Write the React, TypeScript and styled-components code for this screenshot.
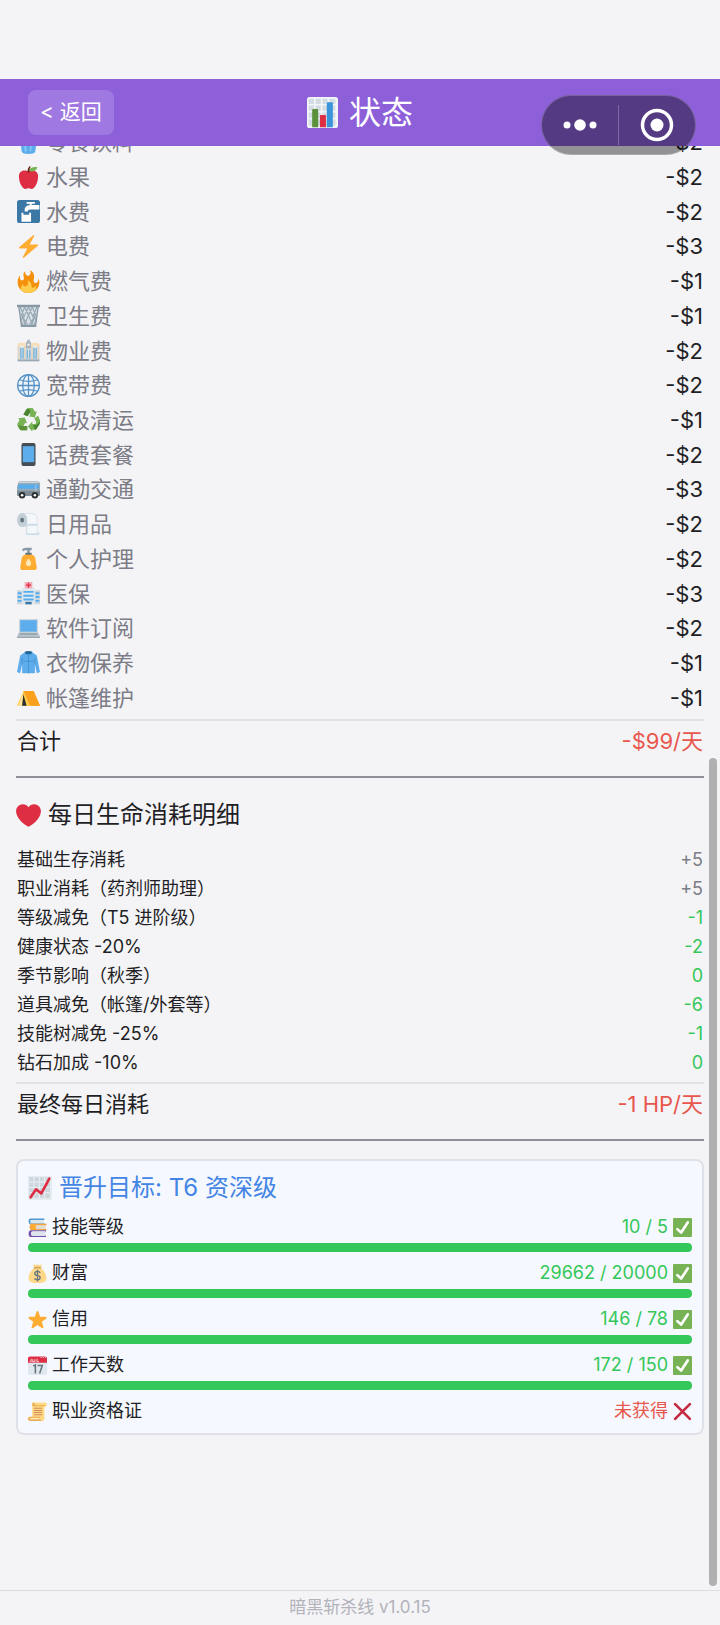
import React from "react";
import styled, { createGlobalStyle } from "styled-components";

const GlobalStyle = createGlobalStyle`
  * { box-sizing: border-box; }
  body {
    margin: 0;
    background: #f4f4f7;
    color: #1f1f25;
    font-family: Inter, "Noto Sans CJK SC", sans-serif;
  }
`;

/* ---------- icons, all drawn on a 36 x 36 grid ---------- */

const shapes = {
  drink: (
    <>
      <path fill="#CCD6DD" d="M4 8h28v4H4z" />
      <path fill="#5DADEC" d="M5 12h26l-2 18q0 6-11 6T7 30z" />
      <path fill="#88C9F9" d="M11 14h3l1 18h-3zM21 14h3l-2 18h-2z" />
    </>
  ),
  apple: (
    <>
      <path fill="#DD2E44" d="M24 7c-3 0-3 1-6 1s-3-1-6-1c-4 0-9 2-9 9 0 11 6 20 10 20 3 0 3-1 5-1s2 1 5 1c4 0 10-9 10-20 0-7-5-9-9-9z" />
      <path fill="#77B255" d="M18 8C20 3 25 1 32 2c-2 6-8 8-14 6z" />
      <path fill="#662113" d="M17 10c-1-4 0-7 3-10l1.500 1c-2 3-2.500 5-2 9z" />
    </>
  ),
  tap: (
    <>
      <rect width="36" height="36" rx="4" fill="#3B78A6" />
      <path fill="#fff" d="M15 3h13v3h-5v2h12v7H24q-6-1-7 2v1h-5v-4q1-5 8-6V6h-5z" />
      <path fill="#fff" d="M7 20h3v3h9v-3h3v14H7z" />
    </>
  ),
  bolt: (
    <path fill="#FFAC33" d="M32.938 15.651C32.792 15.260 32.418 15 32 15H19.925L26.890 1.458c.219-.426.106-.947-.271-1.243C26.437.071 26.218 0 26 0c-.233 0-.466.082-.653.243L18 6.588 3.347 19.243c-.316.273-.430.714-.284 1.105S3.582 21 4 21h12.075L9.110 34.542c-.219.426-.106.947.271 1.243.182.144.401.215.619.215.233 0 .466-.082.653-.243L18 29.412l14.653-12.655c.317-.273.430-.714.285-1.106z" />
  ),
  fire: (
    <>
      <path fill="#F4900C" d="M35 19c0-2.062-.367-4.039-1.040-5.868-.460 5.389-3.333 8.157-6.335 6.868-2.812-1.208-.917-5.917-.777-8.164.236-3.809-.012-8.169-6.931-11.794 2.875 5.500.333 8.917-2.333 9.125-2.958.231-5.667-2.542-4.667-7.042-3.238 2.386-3.332 6.402-2.333 9 1.042 2.708-.042 4.958-2.583 5.208-2.840.280-4.418-3.041-2.963-8.333C2.520 10.965 1 14.805 1 19c0 9.389 7.611 17 17 17s17-7.611 17-17z" />
      <path fill="#FFCC4D" d="M28.394 23.999c.148 3.084-2.561 4.293-4.019 3.709-2.106-.843-1.541-2.291-2.083-5.291s-2.625-5.083-5.708-6c2.250 6.333-1.247 8.667-3.080 9.084-1.872.426-3.753-.001-3.968-4.007C7.352 23.668 6 26.676 6 30c0 .368.023.730.055 1.090C9.125 34.124 13.342 36 18 36s8.875-1.876 11.945-4.910c.032-.360.055-.722.055-1.090 0-2.187-.584-4.236-1.606-6.001z" />
    </>
  ),
  basket: (
    <>
      <path fill="#DCE3E8" d="M2 4h32l-4 32H6z" />
      <path fill="none" stroke="#99AAB5" strokeWidth="2" d="M5 5l5 12-4 9 5 9M12 5L7 17l7 18M12 5l6 12-7 18M18 5l-8 17 8 13M18 5l8 17-8 13M24 5l-6 12 7 18M24 5l5 12-7 18M31 5l-5 12 4 9-5 9" />
      <path fill="none" stroke="#8899A6" strokeWidth="2" d="M3 5l4 29h22l4-29" />
      <path fill="#8899A6" d="M0 1h36v4H0zM6 33h24v3H6z" />
    </>
  ),
  building: (
    <>
      <path fill="#D9DEE3" d="M1 12h34v22H1z" />
      <path fill="#F6DEBB" d="M0 10l3-4h11v5H0zM22 6h11l3 4v1H22z" />
      <path fill="#E3D6C2" d="M1 11h3v21H1zM32 11h3v21h-3zM11 11h3v21h-3zM22 11h3v21h-3z" />
      <path fill="#6CB0DC" d="M5 14h2v17H5zM8.500 14h2v17h-2zM25.500 14h2v17h-2zM29 14h2v17h-2zM15 17h2v14h-2zM19 17h2v14h-2z" />
      <path fill="#A9B4BD" d="M14 7q0-3 2-3V1h4v3q2 0 2 3v8h-8z" />
      <circle cx="18" cy="9" r="2" fill="#E8EDF0" />
      <path fill="#99AAB5" d="M1 32h34v3H1z" />
    </>
  ),
  globe: (
    <g fill="none" stroke="#5490C4" strokeWidth="2">
      <circle cx="18" cy="18" r="17" fill="#EDF5FC" />
      <ellipse cx="18" cy="18" rx="9" ry="17" />
      <path d="M18 1v34M1 18h34M4 9q14 5 28 0M4 27q14-5 28 0" />
    </g>
  ),
  recycle: (
    <>
      <path fill="#77B255" d="M10 10l5-8q1-2 4-2h4q2 0 3 2l2 4 3-1-3 10-10-2 3-2-3-4-3 6z" />
      <path fill="#4B8430" d="M10 10l5-8q2-2 4 0l2 3-4 8z" />
      <path fill="#77B255" d="M2 16l10-1 4 9-3-1-3 5h6v7H7q-2 0-3-2l-3-5q-1-2 0-4l3-5z" />
      <path fill="#5C913B" d="M1 27l3 6q1 2 3 2h9v-7H7z" />
      <path fill="#77B255" d="M27 16l6-4 3 7q1 3-1 6l-4 7q-1 2-3 2h-4v3l-7-8 7-8v4h5l1-3z" />
      <path fill="#4B8430" d="M36 21q0 3-1 5l-4 6q-1 2-3 2l-3-7h4q3-1 7-6z" />
    </>
  ),
  phone: (
    <>
      <rect x="7" width="22" height="36" rx="3" fill="#454D55" />
      <path fill="#5DADEC" d="M9 5h18v25H9z" />
    </>
  ),
  bus: (
    <>
      <path fill="#99AAB5" d="M2 7q1-2 4-2h26q3 0 4 3v18q0 2-2 2H2q-2 0-2-2V14z" />
      <path fill="#808C95" d="M0 20h36v6q0 2-2 2H2q-2 0-2-2z" />
      <path fill="#55ACEE" d="M3 10h31v7H1z" />
      <path fill="#CCD6DD" d="M3 6h31v2H3zM29 10h1v16h-1z" />
      <circle cx="8" cy="27" r="5" fill="#292F33" /><circle cx="8" cy="27" r="2" fill="#fff" />
      <circle cx="28" cy="27" r="5" fill="#292F33" /><circle cx="28" cy="27" r="2" fill="#fff" />
    </>
  ),
  roll: (
    <>
      <path fill="#D5DEE4" d="M8 0h16q8 1 8 12v17l4 3-3 3-19-1V22H8z" />
      <path fill="#F5F8FA" d="M10 1h14q7 1 7 11v5H16Q17 5 10 1zM16 20h15v12H16z" />
      <ellipse cx="8" cy="11" rx="8" ry="11" fill="#C3CFD7" />
      <ellipse cx="8" cy="11" rx="3" ry="4" fill="#66757F" />
      <path fill="none" stroke="#BDDDF4" d="M15 19h17M14 33h20" />
    </>
  ),
  lotion: (
    <>
      <path fill="#8899A6" d="M8 4q1-3 6-3h9v4h-3v5h-4V5h-4l-3 2z" />
      <path fill="#66757F" d="M13 9h10v4H13z" />
      <path fill="#FFAC33" d="M12 12h12q5 2 5 8l2 13q0 3-3 3H8q-3 0-3-3l2-13q0-6 5-8z" />
      <path fill="#FFE8B6" d="M18 18q5 6 4 9-1 3-4 3t-4-3q-1-3 4-9z" />
    </>
  ),
  hospital: (
    <>
      <path fill="#CCD6DD" d="M0 13h9v22H0zM27 13h9v22h-9z" />
      <path fill="#E1E8ED" d="M8 9h20v26H8z" />
      <path fill="#55ACEE" d="M10 14h16v3H10zM10 20h16v3H10zM10 26h16v3H10zM1 16h6v3H1zM1 22h6v3H1zM1 28h6v3H1zM29 16h6v3h-6zM29 22h6v3h-6zM29 28h6v3h-6z" />
      <path fill="#3B78A6" d="M13 31h10v4H13z" />
      <path fill="#F4ABBA" d="M12 0h12v10H12z" />
      <path fill="#DD2E44" d="M17 1h2v3h3v2h-3v3h-2V6h-3V4h3z" />
    </>
  ),
  laptop: (
    <>
      <path fill="#CCD6DD" d="M5 3h26q2 0 2 2v19H3V5q0-2 2-2z" />
      <path fill="#5DADEC" d="M5 5h26v18H5z" />
      <path fill="#B8C3CB" d="M3 24h30l3 7v2H0v-2z" />
      <path fill="#9AA8B2" d="M5 25h26l1 3H4zM0 31h36v2H0z" />
    </>
  ),
  coat: (
    <>
      <path fill="#5DADEC" d="M12 2h12l7 5 5 26-5 2-3-14v14H8V21L5 35l-5-2L5 7z" />
      <path fill="#226699" d="M12 1q6-2 12 0l-2 4h-8z" />
      <path fill="none" stroke="#3B88C3" d="M18 4v31M8 21V11M28 21V11M10 16h16" />
    </>
  ),
  tent: (
    <>
      <path fill="#FFAC33" d="M10 8h16l10 23H9z" />
      <path fill="#F9A01F" d="M11 8h15l10 23H21z" />
      <path fill="#FFCC4D" d="M10 8L0 31h20z" />
      <path fill="#292F33" d="M10 13l-2 18h7z" />
      <path fill="#FFE8B6" d="M10 8l-3 23H3z" />
    </>
  ),
  heart: (
    <path fill="#DD2E44" d="M35.885 11.833c0-5.450-4.418-9.868-9.867-9.868-3.308 0-6.227 1.633-8.018 4.129-1.791-2.496-4.710-4.129-8.017-4.129-5.450 0-9.868 4.417-9.868 9.868 0 .772.098 1.520.266 2.241C1.751 22.587 11.216 31.568 18 34.034c6.783-2.466 16.249-11.447 17.617-19.959.170-.721.268-1.469.268-2.242z" />
  ),
  bars: (
    <>
      <rect width="36" height="36" rx="3" fill="#F2F5F7" />
      <path fill="#D3DCE3" d="M2 2h6v6H2zM10 2h6v6h-6zM18 2h6v6h-6zM26 2h7v6h-7zM2 10h6v6H2zM10 10h6v6h-6zM18 10h6v6h-6zM26 10h7v6h-7zM2 18h6v6H2zM10 18h6v6h-6zM18 18h6v6h-6zM26 18h7v6h-7zM2 26h6v7H2zM10 26h6v7h-6zM18 26h6v7h-6zM26 26h7v7h-7z" />
      <path fill="#5C913B" d="M6 15q0-1 1-1h5q1 0 1 1v20H6z" />
      <path fill="#DD2E44" d="M15 22q0-1 1-1h5q1 0 1 1v13h-7z" />
      <path fill="#3B94D9" d="M23 7q0-1 1-1h5q1 0 1 1v28h-7z" />
    </>
  ),
  trend: (
    <>
      <rect width="36" height="36" rx="2" fill="#E6EBEF" />
      <path fill="#CCD6DD" d="M2 2h6v6H2zM10 2h6v6h-6zM18 2h6v6h-6zM26 2h7v6h-7zM2 10h6v6H2zM10 10h6v6h-6zM18 10h6v6h-6zM26 10h7v6h-7zM2 18h6v6H2zM10 18h6v6h-6zM18 18h6v6h-6zM26 18h7v6h-7zM2 26h6v7H2zM10 26h6v7h-6zM18 26h6v7h-6zM26 26h7v7h-7z" />
      <path fill="none" stroke="#DD2E44" strokeWidth="4" strokeLinecap="round" strokeLinejoin="round" d="M4 32l8-12 8 6L32 4" />
    </>
  ),
  books: (
    <>
      <path fill="#4E9AD0" d="M4 1h27v3H5v6h26v2H4Q1 11 1 6t3-5z" />
      <path fill="#DCE5EB" d="M5 4h25v6H5z" />
      <path fill="#F4A23A" d="M6 11h29v3H7v7h28v2H6q-3-1-3-6t3-6z" />
      <path fill="#E0DCD2" d="M14 14h20v7H14z" />
      <path fill="#FFAC33" d="M6 12h9v10H6z" />
      <path fill="#7450A8" d="M4 23h30v3H6v7h28v3H4q-3-1-3-6t3-7z" />
      <path fill="#DCE5EB" d="M8 25h25v9H8z" />
    </>
  ),
  money: (
    <>
      <path fill="#FDD888" d="M12 7L9 1l5 1 4-1 4 1 5-1-3 6c7 6 11 13 11 20 0 6-4 9-17 9S1 33 1 27C1 20 5 13 12 7z" />
      <path fill="#D5A25C" d="M11 6q7-2 14 0v3q-7-2-14 0z" />
      <path fill="none" stroke="#67757F" strokeWidth="2.500" d="M23 17q-1-3-5-3-5 0-5 4t5 4 5 4-5 4-5-3M18 11v22" />
    </>
  ),
  star: (
    <path fill="#FFAC33" d="M27.287 34.627c-.404 0-.806-.124-1.152-.371L18 28.422l-8.135 5.834a1.970 1.970 0 0 1-2.312-.008 1.971 1.971 0 0 1-.721-2.194l3.034-9.792-8.062-5.681a1.980 1.980 0 0 1-.708-2.203 1.978 1.978 0 0 1 1.866-1.363L12.947 13l3.179-9.549a1.976 1.976 0 0 1 3.749 0L23 13l10.036.015a1.975 1.975 0 0 1 1.159 3.566l-8.062 5.681 3.034 9.792a1.970 1.970 0 0 1-.720 2.194 1.957 1.957 0 0 1-1.160.379z" />
  ),
  calendar: (
    <>
      <path fill="#E1E8ED" d="M0 11h36v21q0 4-4 4H4q-4 0-4-4z" />
      <path fill="#DD2E44" d="M0 4q0-3 4-3h28q4 0 4 3v9H0z" />
      <path fill="#F5C6CD" d="M24 2h2v2h-2zM28 2h2v2h-2zM32 2h2v2h-2zM5 5h2v6H3V9h2zM8 6h2v4h2V6h2v6H8zM16 5h2v5h3v2h-5z" />
      <path fill="none" stroke="#66757F" strokeWidth="3" d="M10 19l4-2v16M18 18h9l-5 15" />
    </>
  ),
  scroll: (
    <>
      <path fill="#FFD983" d="M8 1h24q4 0 4 4t-4 4h-1v23q0 4-4 4H5q-5 0-5-5 0-3 4-3h4z" />
      <path fill="#E8AE54" d="M8 5q0-4 4-4-1 4 3 5h17v2H11q-3-1-3-3zM0 31q0-3 4-3h19q-2 4 3 8H5q-5 0-5-5z" />
      <path fill="#FFE8B6" d="M4 30h18v3H4z" />
      <path stroke="#D08A5C" strokeWidth="2" d="M11 12h16M11 16h16M11 20h16M11 24h16" />
    </>
  ),
  check: (
    <>
      <rect width="36" height="36" rx="2" fill="#77B255" />
      <path fill="#fff" d="M29.280 6.362a2.502 2.502 0 0 0-3.458.736L14.936 23.877l-5.029-4.650a2.500 2.500 0 1 0-3.394 3.671l7.209 6.666c.480.445 1.090.665 1.696.665.673 0 1.534-.282 2.099-1.139.332-.506 12.500-19.270 12.500-19.270a2.500 2.500 0 0 0-.737-3.458z" />
    </>
  ),
  cross: <path fill="none" stroke="#C42A40" strokeWidth="5" strokeLinecap="round" d="M4 4l28 28M32 4L4 32" />,
};

type IconName = keyof typeof shapes;

const IconSvg = styled.svg<{ $size: number }>`
  flex: none;
  width: ${(p) => p.$size}px;
  height: ${(p) => p.$size}px;
`;

const Icon = ({ name, size }: { name: IconName; size: number }) => (
  <IconSvg $size={size} viewBox="0 0 36 36" aria-hidden="true">
    {shapes[name]}
  </IconSvg>
);

/* ---------- page frame ---------- */

const Page = styled.div`
  display: flex;
  flex-direction: column;
  min-height: 100vh;
  padding-top: 79px;
`;

const Header = styled.header`
  position: relative;
  z-index: 1;
  display: grid;
  grid-template-columns: 1fr auto 1fr;
  align-items: center;
  height: 67px;
  padding: 0 28px;
  background: #8d60da;
  color: #fff;
`;

const BackButton = styled.button`
  justify-self: start;
  height: 45px;
  padding: 0 12px 2px;
  border: 0;
  border-radius: 8px;
  background: #a078e1;
  color: inherit;
  font: inherit;
  font-size: 21px;
  line-height: 40px;
`;

const Title = styled.h1`
  display: flex;
  align-items: center;
  gap: 11px;
  margin: 0;
  font-size: 32px;
  font-weight: 400;
  line-height: 40px;
`;

const Capsule = styled.div`
  position: absolute;
  top: 16px;
  right: 24px;
  display: flex;
  align-items: center;
  width: 155px;
  height: 60px;
  border: 1px solid rgba(255, 255, 255, 0.2);
  border-radius: 30px;
  background: rgba(0, 0, 0, 0.4);
`;

const CapsuleButton = styled.button`
  display: flex;
  flex: 1;
  align-items: center;
  justify-content: center;
  height: 40px;
  padding: 0;
  border: 0;
  background: none;

  & + & {
    border-left: 1px solid rgba(255, 255, 255, 0.25);
  }
`;

const Main = styled.main`
  position: relative;
  flex: 1;
  overflow: hidden;
  padding: 0 16px;
`;

const ScrollThumb = styled.div`
  position: absolute;
  top: 42.4%;
  right: 3px;
  bottom: 4px;
  width: 8px;
  border-radius: 4px;
  background: #b0b0b0;
`;

const Footer = styled.footer`
  height: 35px;
  border-top: 1px solid #dcdce0;
  color: #b2b2ba;
  font-size: 17px;
  line-height: 33px;
  text-align: center;
`;

/* ---------- lists ---------- */

type Tone = "plain" | "muted" | "good" | "bad";

const tones: Record<Tone, string> = {
  plain: "#1f1f25",
  muted: "#7c7c86",
  good: "#34c759",
  bad: "#e8574d",
};

const Section = styled.section`
  border-bottom: 2px solid #8f8f98;
`;

const ExpenseList = styled.dl`
  display: grid;
  grid-auto-rows: 1fr;
  min-height: 590px;
  margin: -21px 0 4px;
  padding: 0 1px;
  font-size: 22px;
  line-height: 32px;
`;

const DrainList = styled.dl`
  margin: 0 0 5px;
  padding: 0 1px;
  font-size: 18px;
  line-height: 29px;
`;

const Row = styled.div`
  display: flex;
  align-items: center;
  justify-content: space-between;
`;

const Label = styled.dt<{ $tone?: Tone; $gap?: number }>`
  display: flex;
  align-items: center;
  gap: ${(p) => p.$gap ?? 6}px;
  color: ${(p) => tones[p.$tone ?? "plain"]};
`;

const Value = styled.dd<{ $tone?: Tone }>`
  display: flex;
  align-items: center;
  gap: 5px;
  margin: 0;
  color: ${(p) => tones[p.$tone ?? "plain"]};
`;

const Total = styled.dl`
  margin: 0 0 15px;
  padding: 0 1px;
  border-top: 2px solid #e2e2e6;
  font-size: 22px;
  line-height: 40px;
`;

const Heading = styled.h2`
  display: flex;
  align-items: center;
  gap: 7px;
  margin: 0;
  padding: 19px 0 12px;
  font-size: 24px;
  font-weight: 400;
  line-height: 36px;
`;

/* ---------- promotion card ---------- */

const Card = styled.section`
  margin-top: 18px;
  padding: 8px 10px 6px;
  border: 2px solid #e0e1e8;
  border-radius: 8px;
  background: #f5f8fe;
`;

const CardTitle = styled.h2`
  display: flex;
  align-items: center;
  gap: 7px;
  margin: 0 0 4px;
  color: #4385e4;
  font-size: 24px;
  font-weight: 400;
  line-height: 38px;
`;

const Goals = styled.dl`
  display: flex;
  flex-direction: column;
  gap: 5px;
  margin: 0;
  font-size: 18px;
  line-height: 32px;
`;

const Progress = styled.progress`
  display: block;
  width: 100%;
  height: 9px;
  border: 0;
  border-radius: 4px;
  appearance: none;
  overflow: hidden;
  background: #e0e3ea;

  &::-webkit-progress-bar {
    background: #e0e3ea;
  }

  &::-webkit-progress-value {
    border-radius: 4px;
    background: #34c759;
  }
`;

/* ---------- data ---------- */

const expenses: [IconName, string, string][] = [
  ["drink", "零食饮料", "-$2"],
  ["apple", "水果", "-$2"],
  ["tap", "水费", "-$2"],
  ["bolt", "电费", "-$3"],
  ["fire", "燃气费", "-$1"],
  ["basket", "卫生费", "-$1"],
  ["building", "物业费", "-$2"],
  ["globe", "宽带费", "-$2"],
  ["recycle", "垃圾清运", "-$1"],
  ["phone", "话费套餐", "-$2"],
  ["bus", "通勤交通", "-$3"],
  ["roll", "日用品", "-$2"],
  ["lotion", "个人护理", "-$2"],
  ["hospital", "医保", "-$3"],
  ["laptop", "软件订阅", "-$2"],
  ["coat", "衣物保养", "-$1"],
  ["tent", "帐篷维护", "-$1"],
];

const drains: [string, string, Tone][] = [
  ["基础生存消耗", "+5", "muted"],
  ["职业消耗（药剂师助理）", "+5", "muted"],
  ["等级减免（T5 进阶级）", "-1", "good"],
  ["健康状态 -20%", "-2", "good"],
  ["季节影响（秋季）", "0", "good"],
  ["道具减免（帐篷/外套等）", "-6", "good"],
  ["技能树减免 -25%", "-1", "good"],
  ["钻石加成 -10%", "0", "good"],
];

const goals: { icon: IconName; label: string; now: number; need: number }[] = [
  { icon: "books", label: "技能等级", now: 10, need: 5 },
  { icon: "money", label: "财富", now: 29662, need: 20000 },
  { icon: "star", label: "信用", now: 146, need: 78 },
  { icon: "calendar", label: "工作天数", now: 172, need: 150 },
];

export default function App() {
  return (
    <Page>
      <GlobalStyle />
      <Header>
        <BackButton type="button">&lt; 返回</BackButton>
        <Title>
          <Icon name="bars" size={31} />
          状态
        </Title>
        <Capsule>
          <CapsuleButton type="button" aria-label="更多">
            <svg width="36" height="14" viewBox="0 0 36 14" fill="#fff">
              <circle cx="5" cy="7" r="3.500" />
              <circle cx="18" cy="7" r="5.800" />
              <circle cx="31" cy="7" r="3.500" />
            </svg>
          </CapsuleButton>
          <CapsuleButton type="button" aria-label="关闭">
            <svg width="34" height="34" viewBox="0 0 34 34">
              <circle cx="17" cy="17" r="14.500" fill="none" stroke="#fff" strokeWidth="3.500" />
              <circle cx="17" cy="17" r="6.500" fill="#fff" />
            </svg>
          </CapsuleButton>
        </Capsule>
      </Header>

      <Main>
        <Section>
          <ExpenseList>
            {expenses.map(([icon, label, amount]) => (
              <Row key={label}>
                <Label $tone="muted">
                  <Icon name={icon} size={23} />
                  {label}
                </Label>
                <Value>{amount}</Value>
              </Row>
            ))}
          </ExpenseList>
          <Total>
            <Row>
              <Label>合计</Label>
              <Value $tone="bad">-$99/天</Value>
            </Row>
          </Total>
        </Section>

        <Section>
          <Heading>
            <Icon name="heart" size={25} />
            每日生命消耗明细
          </Heading>
          <DrainList>
            {drains.map(([label, amount, tone]) => (
              <Row key={label}>
                <Label>{label}</Label>
                <Value $tone={tone}>{amount}</Value>
              </Row>
            ))}
          </DrainList>
          <Total>
            <Row>
              <Label>最终每日消耗</Label>
              <Value $tone="bad">-1 HP/天</Value>
            </Row>
          </Total>
        </Section>

        <Card>
          <CardTitle>
            <Icon name="trend" size={24} />
            晋升目标: T6 资深级
          </CardTitle>
          <Goals>
            {goals.map((goal) => (
              <div key={goal.label}>
                <Row>
                  <Label $gap={5}>
                    <Icon name={goal.icon} size={19} />
                    {goal.label}
                  </Label>
                  <Value $tone="good">
                    {`${goal.now} / ${goal.need}`}
                    <Icon name="check" size={19} />
                  </Value>
                </Row>
                <Progress aria-label={goal.label} value={Math.min(goal.now, goal.need)} max={goal.need} />
              </div>
            ))}
            <Row>
              <Label $gap={5}>
                <Icon name="scroll" size={19} />
                职业资格证
              </Label>
              <Value $tone="bad">
                未获得
                <Icon name="cross" size={19} />
              </Value>
            </Row>
          </Goals>
        </Card>
        <ScrollThumb />
      </Main>

      <Footer>暗黑斩杀线 v1.0.15</Footer>
    </Page>
  );
}
